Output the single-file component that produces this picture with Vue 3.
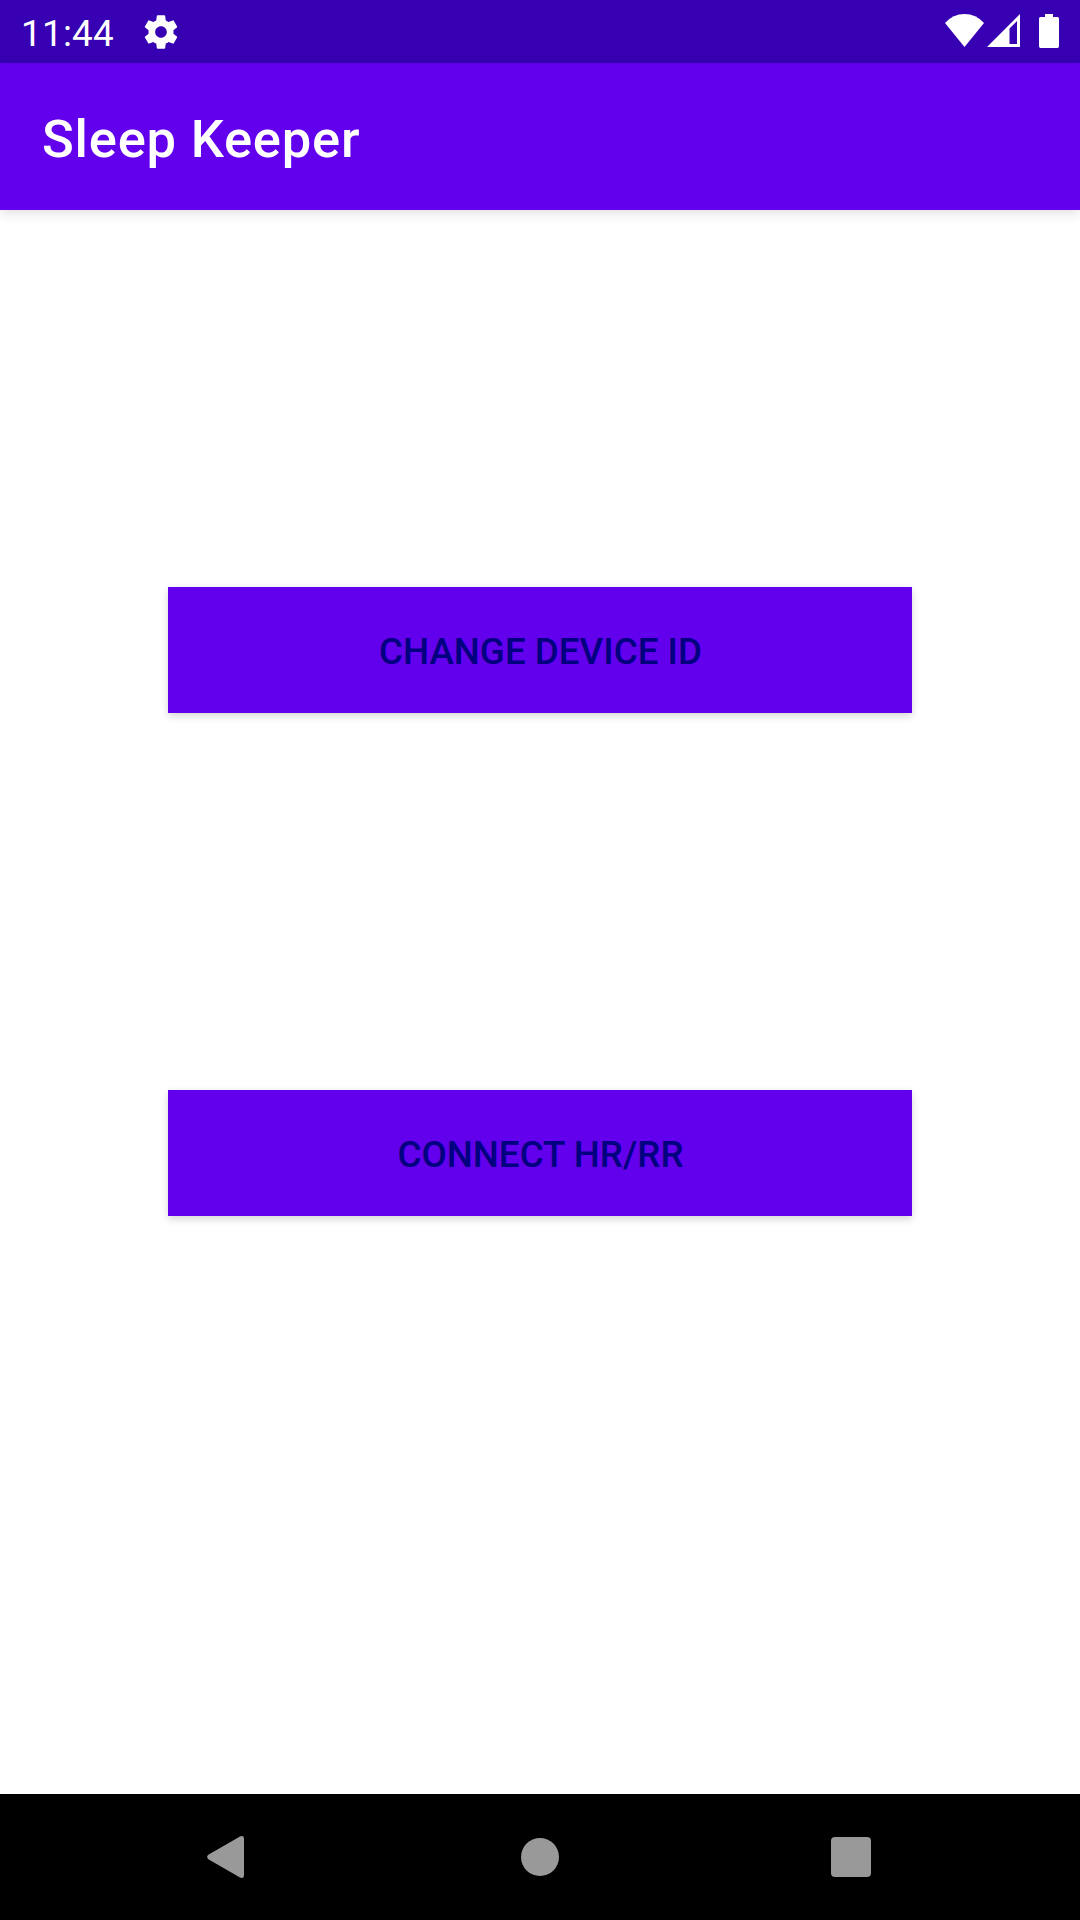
<script setup>
const actions = ['Change Device ID', 'Connect HR/RR']
</script>

<template>
  <div class="screen">
    <header class="status">
      <span class="clock">11:44</span>
      <svg class="gear" width="40" height="40" viewBox="0 0 24 24" fill="#fff">
        <path d="M19.43 12.98c.04-.32.07-.64.07-.98s-.03-.66-.07-.98l2.11-1.65c.19-.15.24-.42.12-.64l-2-3.46c-.12-.22-.39-.3-.61-.22l-2.49 1c-.52-.4-1.08-.73-1.69-.98l-.38-2.65C14.46 2.18 14.25 2 14 2h-4c-.25 0-.46.18-.49.42l-.38 2.65c-.61.25-1.17.59-1.69.98l-2.49-1c-.23-.09-.49 0-.61.22l-2 3.46c-.13.22-.07.49.12.64l2.11 1.65c-.04.32-.07.65-.07.98s.03.66.07.98l-2.11 1.65c-.19.15-.24.42-.12.64l2 3.46c.12.22.39.3.61.22l2.49-1c.52.4 1.08.73 1.69.98l.38 2.65c.03.24.24.42.49.42h4c.25 0 .46-.18.49-.42l.38-2.65c.61-.25 1.17-.59 1.69-.98l2.49 1c.23.09.49 0 .61-.22l2-3.46c.12-.22.07-.49-.12-.64l-2.11-1.65zM12 15.5c-1.93 0-3.5-1.57-3.5-3.5s1.57-3.5 3.5-3.5 3.5 1.57 3.5 3.5-1.57 3.5-3.5 3.5z" />
      </svg>
      <div class="indicators">
        <svg width="39" height="63" viewBox="0 0 39 63" fill="#fff">
          <path d="M0 23Q8 14 19.500 14T39 23L19.500 47Z" />
        </svg>
        <svg class="signal" width="33" height="63" viewBox="0 0 33 63" fill="#fff">
          <path fill-rule="evenodd" d="M0 47L33 14V47ZM22.500 28.500V44H30V21Z" />
        </svg>
        <svg class="battery" width="20" height="63" viewBox="0 0 20 63" fill="#fff">
          <path d="M6 14H14V17H18.500Q20 17 20 18.500V46Q20 48 18.500 48H1.500Q0 48 0 46V18.500Q0 17 1.500 17H6Z" />
        </svg>
      </div>
    </header>
    <div class="appbar"><h1>Sleep Keeper</h1></div>
    <main>
      <button v-for="label in actions" :key="label">{{ label }}</button>
    </main>
    <nav>
      <svg width="37" height="42" viewBox="0 0 37 42" fill="#999">
        <path d="M1.300 18.800L33 .5Q37 -1 37 3V39Q37 43 33 41.500L1.300 23.200Q-1 21 1.300 18.800Z" />
      </svg>
      <svg class="home" width="38" height="38" viewBox="0 0 38 38" fill="#999"><circle cx="19" cy="19" r="19" /></svg>
      <svg width="40" height="40" viewBox="0 0 40 40" fill="#999"><rect width="40" height="40" rx="4" /></svg>
    </nav>
  </div>
</template>

<style>
body { margin: 0; }
</style>

<style scoped>
.screen {
  width: 1080px;
  height: 1920px;
  display: flex;
  flex-direction: column;
  background: #fff;
  font-family: Roboto, sans-serif;
  overflow: hidden;
}
.status {
  height: 63px;
  flex: none;
  display: flex;
  align-items: center;
  background: #3700b3;
  color: #fff;
  padding: 0 21px;
}
.clock {
  font-size: 36.75px;
  line-height: 43px;
  letter-spacing: 0.3px;
  padding-top: 3px;
  width: 92px;
}
.gear { margin-left: 28px; }
.indicators { margin-left: auto; display: flex; }
.signal { margin-left: 3px; }
.battery { margin-left: 19px; }
.appbar {
  height: 147px;
  flex: none;
  display: flex;
  align-items: center;
  padding: 4px 42px 0;
  box-sizing: border-box;
  background: #6200ee;
  box-shadow: 0 3px 12px rgba(0, 0, 0, 0.13);
}
h1 {
  margin: 0;
  color: #fff;
  font-size: 52.5px;
  font-weight: 500;
  line-height: 62px;
  letter-spacing: 0.78px;
}
main {
  flex: 1;
  display: flex;
  flex-direction: column;
  align-items: center;
  gap: 377px;
  padding-top: 377px;
}
button {
  width: 744px;
  height: 126px;
  padding: 2px 0 0 1px;
  border: 0;
  background: #6200ee;
  box-shadow: 0 3px 8px rgba(0, 0, 0, 0.17);
  color: #000080;
  font: 500 36.75px/43px Roboto, sans-serif;
  text-transform: uppercase;
}
nav {
  height: 126px;
  flex: none;
  display: flex;
  align-items: center;
  justify-content: space-between;
  padding: 0 209px 0 207px;
  box-sizing: border-box;
  background: #000;
}
.home { margin-left: 5px; }
</style>
